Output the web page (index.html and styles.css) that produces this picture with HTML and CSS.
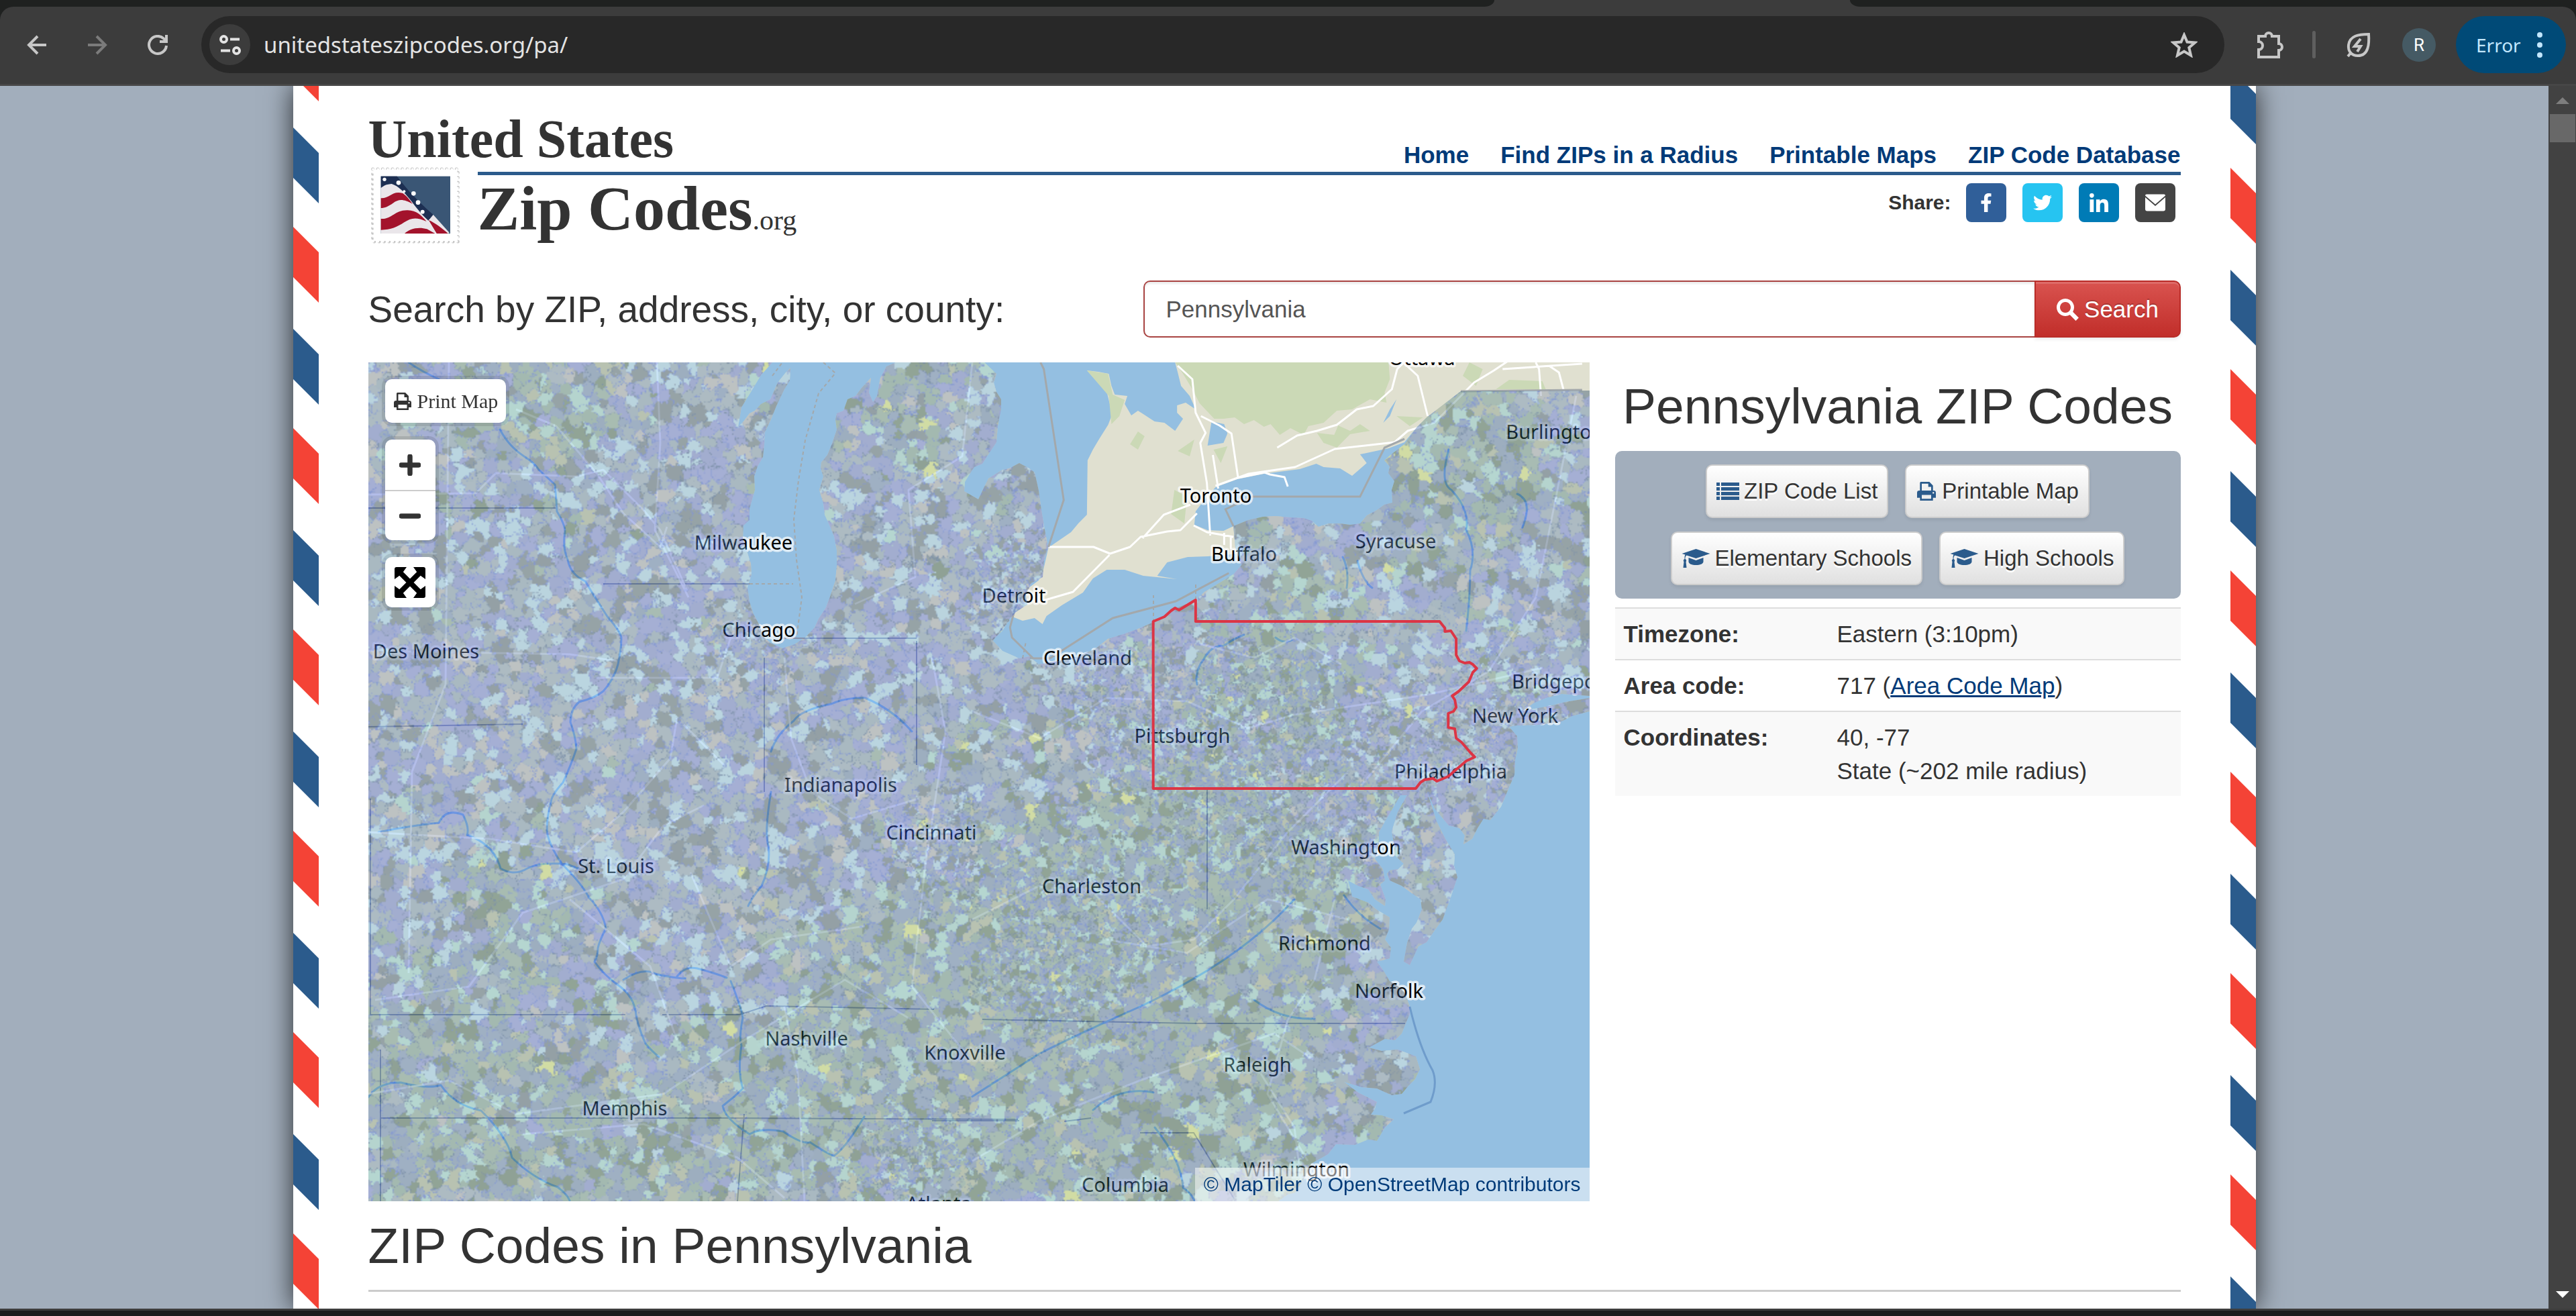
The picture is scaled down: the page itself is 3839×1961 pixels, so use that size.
FILE: index.html
```html
<!DOCTYPE html>
<html lang="en">
<head>
<meta charset="utf-8">
<title>Pennsylvania ZIP Codes</title>
<link rel="stylesheet" href="styles.css">
</head>
<body>
<svg class="sprite" aria-hidden="true">
  <symbol id="i-print" viewBox="0 0 26 26"><path fill-rule="evenodd" d="M5 0h12l5 5v7h1a3 3 0 0 1 3 3v7h-4v4H4v-4H0v-7a3 3 0 0 1 3-3h1V1zM6.500 2.500V12h13V7h-4V2.500zM6.500 18v5.500h13V18zM22.500 14a1.200 1.200 0 1 0 .01 0z"/></symbol>
  <symbol id="i-list" viewBox="0 0 34 26"><path d="M0 0h5v5H0zM7 0h27v5H7zM0 7h5v5H0zM7 7h27v5H7zM0 14h5v5H0zM7 14h27v5H7zM0 21h5v5H0zM7 21h27v5H7z"/></symbol>
  <symbol id="i-cap" viewBox="0 0 42 29"><path d="M21 0l21 7-21 7L7 9.500C5 11 5 13 5 15c2 1 2 3 1 4l1 9H2l1-9c-1-1-1-3 1-4 0-3 0-5 1-6.500L0 7zM10 13l11 4 11-4v6c0 3-5 5-11 5s-11-2-11-5z"/></symbol>
  <symbol id="i-search" viewBox="0 0 34 34"><path fill-rule="evenodd" d="M14 1a13 13 0 1 1-.01 0zm0 5a8 8 0 1 0 .01 0z"/><path d="M21 24l3-3 8.500 8.500-3 3z" stroke="currentColor" stroke-width="2"/></symbol>
</svg>

<header class="browser">
  <div class="tabstrip"><i class="tab-left"></i><i class="tab-right"></i></div>
  <div class="toolbar">
    <div class="nav-buttons">
      <button aria-label="Back"><svg viewBox="0 0 30 30"><path d="M29 15H3M16 2L3 15l13 13"/></svg></button>
      <button class="dim" aria-label="Forward"><svg viewBox="0 0 30 30"><path d="M1 15h26M14 2l13 13-13 13"/></svg></button>
      <button aria-label="Reload"><svg viewBox="0 0 30 30"><path d="M28 16a13 13 0 1 1-4-10.500L28 9M28 0v10H18"/></svg></button>
    </div>
    <div class="urlbar">
      <button class="site-info" aria-label="View site information"><svg viewBox="0 0 32 30"><circle cx="6.500" cy="6.500" r="4.500"/><path d="M16 6.500h14M2 23.500h14"/><circle cx="25.500" cy="23.500" r="4.500"/></svg></button>
      <input class="url" aria-label="Address" value="unitedstateszipcodes.org/pa/">
      <button class="star" aria-label="Bookmark"><svg viewBox="0 0 40 38"><path d="M20 4l4.500 10.500L36 15.500l-8.700 7.500 2.700 11.500-10-6-10 6L12.700 23 4 15.500l11.500-1z"/></svg></button>
    </div>
    <button class="ext" aria-label="Extensions"><svg viewBox="0 0 42 42"><path d="M3 8h10a5 5 0 0 1 10 0h10v11a5 5 0 0 1 0 10v10H3V28a6 6 0 0 0 0-12z"/></svg></button>
    <i class="divider"></i>
    <button class="leaf" aria-label="Energy saver"><svg viewBox="0 0 36 38"><path d="M2 36l5-6M33 3c1 14 0 32-16 32C7 35 2 28 3 19 5 5 18 3 33 3zM21 10l-9 11h9l-5 8"/></svg></button>
    <button class="profile" aria-label="Profile">R</button>
    <button class="error">Error <svg viewBox="0 0 8 38"><circle cx="4" cy="4" r="4"/><circle cx="4" cy="19" r="4"/><circle cx="4" cy="34" r="4"/></svg></button>
  </div>
</header>

<div class="window">
  <main class="page">
    <header class="masthead">
      <div class="top-row">
        <span class="brand brand-top">United States</span>
        <nav><a href="#">Home</a><a href="#">Find ZIPs in a Radius</a><a href="#">Printable Maps</a><a href="#">ZIP Code Database</a></nav>
      </div>
      <div class="low-row">
        <svg class="stamp" viewBox="36 54 400 348">
          <rect x="46" y="66" width="380" height="324" fill="none" stroke="#c8c8c8" stroke-width="15" stroke-linecap="round" stroke-dasharray="0 22"/>
          <rect x="47" y="67" width="378" height="322" fill="none" stroke="#fff" stroke-width="11" stroke-linecap="round" stroke-dasharray="0 22"/>
          <rect x="49" y="69" width="374" height="318" fill="#fff"/>
          <rect x="82" y="98" width="310" height="256" fill="#3a5675"/>
          <path d="M82 140l70-12 140 160 90 66H82z" fill="#eae6ea"/>
          <path d="M82 98h72c40 50 70 90 162 172l-22 26C230 240 190 150 130 132c-20-4-35 10-48 18z" fill="#1d2f52"/>
          <path d="M82 196c40 2 50-36 98-22 18 12 34 34 44 48-40-22-60-24-88-4-20 14-36 22-54 22zM82 288c50 4 60-40 120-38 40 2 60 22 84 50-50-22-70-14-100 4-30 20-60 34-104 34zM188 354c20-20 60-32 100-20l36 20zM296 294c30 24 60 36 86 60h-50z" fill="#a3132c"/>
          <path d="M316 270l72 80-6 4-86-60z" fill="#eae6ea"/>
          <path d="M296 294c30 14 60 36 86 60h-50z" fill="#a3132c"/>
          <g fill="#fff"><circle cx="98" cy="112" r="8"/><circle cx="161" cy="127" r="10"/><circle cx="228" cy="175" r="10"/><circle cx="248" cy="215" r="10"/><circle cx="268" cy="257" r="9"/><circle cx="186" cy="166" r="6"/></g>
        </svg>
        <div class="rule-row">
          <span class="brand brand-low">Zip Codes<small>.org</small></span>
          <div class="share"><b>Share:</b>
            <a href="#" class="fb" aria-label="Facebook"><svg viewBox="0 0 320 512"><path d="M279.140 288l14.220-92.660h-88.910v-60.130c0-25.350 12.420-50.060 52.240-50.060h40.420V6.260S260.430 0 225.360 0c-73.220 0-121.080 44.380-121.080 124.720v70.620H22.890V288h81.390v224h100.170V288z"/></svg></a>
            <a href="#" class="tw" aria-label="Twitter"><svg viewBox="0 0 512 512"><path d="M459.370 151.716c.325 4.548.325 9.097.325 13.645 0 138.720-105.583 298.558-298.558 298.558-59.452 0-114.680-17.219-161.137-47.106 8.447.974 16.568 1.299 25.340 1.299 49.055 0 94.213-16.568 130.274-44.832-46.132-.975-84.792-31.188-98.112-72.772 6.498.974 12.995 1.624 19.818 1.624 9.421 0 18.843-1.300 27.614-3.573-48.081-9.747-84.143-51.980-84.143-102.985v-1.299c13.969 7.797 30.214 12.670 47.431 13.319-28.264-18.843-46.781-51.005-46.781-87.391 0-19.492 5.197-37.360 14.294-52.954 51.655 63.675 129.300 105.258 216.365 109.807-1.624-7.797-2.599-15.918-2.599-24.040 0-57.828 46.782-104.934 104.934-104.934 30.213 0 57.502 12.670 76.670 33.137 23.715-4.548 46.456-13.320 66.599-25.340-7.798 24.366-24.366 44.833-46.132 57.827 21.117-2.273 41.584-8.122 60.426-16.243-14.292 20.791-32.161 39.308-52.628 54.253z"/></svg></a>
            <a href="#" class="li" aria-label="LinkedIn"><svg viewBox="0 0 448 448"><path d="M100.280 448H7.400V148.900h92.880zM53.790 108.100C24.090 108.100 0 83.500 0 53.800a53.790 53.790 0 0 1 107.580 0c0 29.700-24.100 54.300-53.790 54.300zM447.900 448h-92.680V302.400c0-34.700-.7-79.200-48.290-79.200-48.290 0-55.690 37.700-55.690 76.700V448h-92.780V148.900h89.080v40.800h1.300c12.400-23.500 42.690-48.300 87.880-48.300 94 0 111.280 61.900 111.280 142.300V448z"/></svg></a>
            <a href="#" class="em" aria-label="Email"><svg viewBox="0 0 30 25"><path d="M2 0h26a2 2 0 0 1 2 2L15 15 0 2a2 2 0 0 1 2-2zM0 4.500L15 17.500l15-13V22a3 3 0 0 1-3 3H3a3 3 0 0 1-3-3z"/></svg></a>
          </div>
        </div>
      </div>
    </header>

    <form class="search" onsubmit="return false">
      <label for="q">Search by ZIP, address, city, or county:</label>
      <div class="search-group">
        <input id="q" type="text" value="Pennsylvania">
        <button><svg><use href="#i-search"/></svg>Search</button>
      </div>
    </form>

    <div class="columns">
      <section class="map" aria-label="Map">
        <svg class="map-base" viewBox="0 0 1820 1250">
          <rect width="1820" height="1250" fill="#94bfe1"/>
          <path id="us-land" fill="#e0e0d0" fill-rule="evenodd" d="M0 0H602L585 19 570 44 556 67 551 96 559 88 568 76 576 72 585 62 599 55 610 30 622 15 629 8 628 27 620 40 608 65 600 85 591 104 590 122 588 141 580 155 575 170 576 190 568 218 568 235 559 243 558 262 565 284 570 300 571 316 565 335 568 357 574 375 582 390 588 408 599 418 617 426 635 420 651 410 665 395 671 382 682 365 688 349 696 325 698 304 698 280 694 259 686 240 680 227 678 210 672 190 675 180 678 170 674 158 675 149 684 138 691 121 698 100 696 85 698 76 708 72 714 55 726 50 735 38 749 23 746 45 752 59 758 50 763 23 772 6 786 0H918L936 17 932 30 936 44 943 55 943 70 938 95 936 119 922 140 915 151 903 156 895 168 889 178 888 192 909 204 918 185 924 173 945 160 955 158 970 150 985 158 993 164 999 191 1003 220 1008 249 1013 276 1007 295 1005 320 988 329 980 345 982 361 965 372 955 383 945 400 930 414 945 430 970 441 985 438 999 450 1028 445 1058 438 1083 427 1102 412 1125 405 1147 397 1170 387 1186 382 1202 367 1233 354 1246 342 1274 325 1290 315 1301 302 1297 290 1292 276 1289 244 1311 235 1333 230 1352 229 1374 231 1394 232 1406 236 1416 245 1431 240 1448 240 1463 242 1478 240 1488 228 1503 220 1514 212 1526 209 1525 190 1529 177 1520 165 1522 155 1514 146 1527 135 1544 122 1562 97 1577 82 1598 66 1628 43 1652 43 1820 42V497L1778 494 1755 500 1736 508 1721 519 1760 512 1784 506 1820 500V520L1794 527 1778 535 1745 540 1712 541 1700 543 1712 557 1713 575 1709 593 1708 615 1700 633 1688 662 1672 682 1662 680 1653 694 1645 710 1632 718 1634 705 1626 694 1610 690 1589 665 1578 640 1592 684 1605 710 1619 733 1618 750 1623 767 1612 800 1601 830 1590 845 1577 864 1565 870 1558 885 1552 898 1543 893 1548 865 1555 844 1562 835 1570 815 1568 800 1555 791 1540 780 1522 772 1518 762 1522 757 1535 755 1543 747 1530 735 1528 715 1525 699 1534 670 1548 645 1538 645 1515 684 1506 700 1506 718 1500 740 1512 755 1515 772 1508 778 1516 800 1515 810 1500 800 1490 785 1475 780 1460 772 1466 796 1490 805 1502 815 1522 827 1521 845 1515 860 1524 872 1522 888 1503 893 1512 905 1522 922 1535 930 1545 940 1552 960 1552 971 1546 985 1540 1000 1530 1010 1515 1008 1491 1021 1510 1026 1534 1024 1545 1028 1561 1034 1567 1053 1560 1068 1550 1078 1540 1090 1525 1092 1503 1082 1480 1080 1454 1072 1475 1088 1503 1102 1500 1112 1494 1121 1510 1122 1528 1128 1515 1140 1503 1160 1490 1158 1470 1166 1442 1165 1430 1180 1405 1194 1395 1215 1381 1237 1370 1240 1356 1250H0Z"/>
          <path d="M1552 960q14 60 34 95q8 20-3 47l-40 17" fill="none" stroke="#6f9ccb" stroke-width="3"/>
          <g transform="matrix(.988 0 0 1 10.700 0)">
            <path fill="#e0e0d0" fill-rule="evenodd" d="M1015 276L1049 253 1060 240 1073 227 1074 146 1082 130 1091 115 1105 93 1112 75 1107 60 1103 44 1085 25 1073 12 1090 14 1106 17 1110 35 1115 48 1134 50 1130 62 1140 79 1150 72 1158 77 1175 88 1190 90 1206 102 1218 84 1209 75 1209 64 1222 60 1237 70 1228 50 1215 35 1210 15 1206 0H1832V42L1661 43 1637 43 1607 66 1570 97 1552 119 1528 128 1485 137 1495 150 1473 169 1455 158 1430 156 1419 151 1394 159 1340 166 1300 174 1267 186 1250 205 1237 222 1235 242 1255 250 1279 251 1294 244 1297 276 1303 285 1255 289 1225 290 1194 298 1179 318 1209 323 1158 318 1130 309 1103 309 1082 322 1067 343 1035 362 1012 378 1006 390 994 381 976 385 958 378V356L1000 325 1006 315ZM1261 88L1280 92 1285 106 1279 120 1255 124ZM1540 55L1530 80 1520 90 1530 70Z"/>
            <path fill="#cbd9b6" d="M1206 0H1528L1530 25 1522 45 1525 60 1500 55 1473 70 1450 72 1430 90 1407 95 1400 108 1380 98 1364 108 1350 92 1340 96 1325 86 1310 92 1296 82 1279 84 1265 84 1243 61 1232 40 1218 17ZM1073 12L1105 17 1112 48 1130 56 1122 80 1110 92 1106 50ZM1420 105L1446 108 1452 94 1470 102 1485 92 1500 102 1470 107 1450 127 1430 120ZM1150 103L1160 110 1150 130 1138 122ZM1235 115L1228 140 1210 132ZM1264 130L1285 125 1275 150ZM1205 190L1224 200 1220 240 1200 226ZM1540 80L1580 82 1560 95ZM1690 40L1710 26 1760 28 1765 40ZM1640 20L1650 0 1670 10 1660 35Z"/>
            <g fill="none" stroke="#fff" stroke-width="3" stroke-linejoin="round">
              <path d="M1210 5l22 20 5 50 15 30-8 15 10 60 5 78M1245 80l28 14 18 12 10 66 40-8 8 3 22 4 5 14M1263 138l8 50M1360 127l30-18 30-7 30-9 30-23 25-5 28-25 8-30 20-20M1550 0l22 20 15 60M1267 184l50-18 70-10 60-27 90-10 20-17 40-12 60-60 30-18 30-20M1015 275h68l25 10 30-10 16-15 40-8 20-2 25-25M1107 287l-55 55-52 15M1157 262l32-35 40-15M1234 243l20 10 40 7M1280 254v18M1290 258v20M1750 0l5 10 3 40M1770 5l15 10 8 30M1700 10l120-8"/>
            </g>
            <path fill="none" stroke="#a3a8ab" stroke-width="3" d="M1003 0l5 10 30 195-23 70M985 335l-20 30-8 30 3 15 32 31h25l95-60 95-25 80-42M1294 244l-12-25 40-19h163l37-73 30-13M1637 43l183-2"/>
          </g>
          <path fill="none" stroke="#a3a8ab" stroke-width="2" stroke-dasharray="5 4" d="M678 0l18 16-25 30-20 70-10 60-7 58 4 60 8 56-8 60M568 330h65M1233 354v-25M1170 387v-40M975 441l5-25M930 414l25-30M602 20l15-20"/>
          <g fill="none" stroke="#8891ab" stroke-width="2">
            <path d="M0 217h282M350 330h218M0 543l230-4M3 650v322h380M438 972h115l40-13 250 5M18 1126h510l440 2M590 440v200M617 411h200M817 415V600M915 979l320 6h310M1037 1131l40-5M1250 635v180M18 1024v226M560 1120l-10 130M840 1130h130M1150 1148h80l60 98"/>
          </g>
          <g fill="none" stroke="#7db3ea" stroke-width="3" stroke-linejoin="round" stroke-linecap="round">
            <path d="M60 0q20 14 45 25M196 100q14 26 36 40q16 10 22 20l24 22q2 20 3 40q12 20 12 30q-4 24 4 42q4 22 26 32q12 20 34 54q18 20 20 30q0 16-5 40q-6 22-22 40q-12 10-36 16q-12 10-13 30q8 22 9 40q-8 24-20 50q-18 20-18 30q-8 30-5 48q6 22 22 44q30 30 40 50q20 20 25 45q-10 20-12 30q0 12-5 20q14 20 34 34q26 18 28 46q4 20 14 42q8 10 20 20M600 580q8-26 34-46q10-16 56-25q20-10 50-9q40 16 70 50M15 700q50-10 90-14q10-22 36-12q10 20 6 30q40 14 50 50q20 12 40 0q20-10 60-6l20 8M460 915q12-16 30-12q30 8 44 14M540 922q16 40 18 54q-6 30-2 42q-6 40 2 64q-14 14-30 26q4 20 40 42q18-10 50-4q30 20 40 16q30 20 36 20q16-10 45-58M600 640q-10 60-4 80q4 30-10 60q-16 20-20 30M380 920q30-20 50-8q30 6 42 6M0 1095q14-22 48-22q40 10 60 4q20 30 60 38q40 40 46 70q30 30 68 44q14 10 18 20M1235 480q-4-20 10-38q10-20 30-20q14-10 30-16M1352 410q12 10 24 4M1610 130q-14 50 4 60q28 30 22 60q16 30 6 60q0 40-6 90M1712 196q24 10 8 50M1452 290q10 20 6 46M1474 296q8 30 22 40M1380 800q-80 90-230 160q-90 40-150 70l-100 64M1454 794q20 30 54 50M1320 950q40 30 90 28M1080 1114q40-36 90-26M1172 1140q40 50 42 90q20 10 30 60"/>
          </g>
          <g fill="none" stroke="#fff" stroke-width="3" stroke-linejoin="round" opacity=".8">
            <path d="M220 70l60 25 60 70 40 60 55 50 10-30M0 197l160-2 30-30 120 5 40-10 60 60 25 30 40 90M430 0l5 120-8 130 50 100M0 430l300 5 70 10M340 470h180l20-60M120 0l-5 480-50 130-5 300M0 700l180 10 130 20 70-60 70-80 10-60M530 600l-60-60M620 440l10 120 30 80 60 40 100-30M300 800l120 100 40 110M500 660l-60 30-60 80-150 50-80 110-140 20M480 760l60 140 60-40 140-20M0 1090l120-20 100 50 220-30 120-80 150-90 100 60M230 1150l180-15 140 50 70 60M620 960l20 100 10 190M900 0l-15 140-80 50 10 130-90 40M900 520l100 40 100-60 120 5 90 40 70-20 200-30 170-40M900 830l120-60 60 20 80 80 70-10 60-60 80-100 90-90M1100 860l120 20 120-80 120 30M1240 420l80 20 60-30 70 40M1440 800l-30 120-40 60-30 110 60 100M900 1190l100-60 150-60 200-70 60 40M1330 1060l50 80 10 80M1800 50l-60 300-70 110-100 60-90 110M840 440l20 110-30 200-20 180 80 100"/>
          </g>
          <g class="labels">
            <text x="559" y="279">Milwaukee</text><text x="582" y="409">Chicago</text><text x="86" y="441">Des Moines</text><text x="962" y="358">Detroit</text><text x="1072" y="451">Cleveland</text><text x="1263" y="209">Toronto</text><text x="1305" y="296">Buffalo</text><text x="1531" y="277">Syracuse</text><text x="1768" y="114">Burlington</text><text x="1570" y="4">Ottawa</text><text x="1778" y="486">Bridgeport</text><text x="1709" y="537">New York</text><text x="1213" y="567">Pittsburgh</text><text x="1613" y="620">Philadelphia</text><text x="704" y="640">Indianapolis</text><text x="839" y="711">Cincinnati</text><text x="369" y="761">St. Louis</text><text x="1078" y="791">Charleston</text><text x="1457" y="733">Washington</text><text x="1425" y="876">Richmond</text><text x="1521" y="947">Norfolk</text><text x="653" y="1018">Nashville</text><text x="889" y="1039">Knoxville</text><text x="1325" y="1057">Raleigh</text><text x="382" y="1122">Memphis</text><text x="1128" y="1236">Columbia</text><text x="1383" y="1213">Wilmington</text><text x="850" y="1264">Atlanta</text>
          </g>
        </svg>
        <canvas class="zip-areas" id="zip-areas" width="1820" height="1250"></canvas>
        <svg class="outline" viewBox="0 0 1820 1250"><path transform="matrix(.988 0 0 1 10.700 0)" d="M1173 386L1190 379 1200 370 1206 366 1212 369 1237 354V386H1605L1613 396V401L1622 400 1630 412V436L1635 445 1643 448 1650 447 1655 450 1661 456 1655 462 1649 476 1634 490 1624 497 1628 503 1630 514 1626 520 1618 523V544L1628 546 1630 560 1638 566 1652 582 1658 588 1645 594 1625 611 1618 617 1601 624 1595 620 1582 622 1576 626 1569 635H1173Z"/></svg>
        <button class="ctl print"><svg><use href="#i-print"/></svg>Print Map</button>
        <div class="ctl zoom"><button aria-label="Zoom in"><svg viewBox="0 0 30 30"><path d="M3 15h24M15 3v24"/></svg></button><button aria-label="Zoom out"><svg viewBox="0 0 30 30"><path d="M3 15h24"/></svg></button></div>
        <button class="ctl full" aria-label="Full screen"><svg viewBox="0 0 46 46"><path d="M8 8l30 30M38 8L8 38" stroke="#000" stroke-width="8"/><path d="M0 18V3a3 3 0 0 1 3-3h15l-5 7-6 6zM28 0h15a3 3 0 0 1 3 3v15l-7-5-6-6zM46 28v15a3 3 0 0 1-3 3H28l5-7 6-6zM18 46H3a3 3 0 0 1-3-3V28l7 5 6 6z"/></svg></button>
        <div class="attribution"><a href="#">© MapTiler</a> <a href="#">© OpenStreetMap contributors</a></div>
      </section>

      <aside class="info">
        <h1>Pennsylvania ZIP Codes</h1>
        <div class="links">
          <a href="#"><svg class="i-list"><use href="#i-list"/></svg>ZIP Code List</a>
          <a href="#"><svg class="i-print"><use href="#i-print"/></svg>Printable Map</a>
          <a href="#"><svg class="i-cap"><use href="#i-cap"/></svg>Elementary Schools</a>
          <a href="#"><svg class="i-cap"><use href="#i-cap"/></svg>High Schools</a>
        </div>
        <table>
          <tr><th scope="row">Timezone:</th><td>Eastern (3:10pm)</td></tr>
          <tr><th scope="row">Area code:</th><td>717 (<a href="#">Area Code Map</a>)</td></tr>
          <tr><th scope="row">Coordinates:</th><td>40, -77<br>State (~202 mile radius)</td></tr>
        </table>
      </aside>
    </div>

    <h2>ZIP Codes in Pennsylvania</h2>
    <hr>
  </main>
  <div class="scrollbar" aria-hidden="true"><i class="up"></i><i class="thumb"></i><i class="down"></i></div>
</div>
<footer class="taskbar"></footer>
<script src="map.js"></script>
</body>
</html>
```
FILE: styles.css
```css
* { box-sizing: border-box; }
body { margin: 0; height: 100vh; display: flex; flex-direction: column; overflow: hidden; background: #a2aebc; color: #333; font: 35px/50px "Liberation Sans", Arial, sans-serif; }
button { font: inherit; color: inherit; border: 0; background: none; padding: 0; }
a { color: #003a78; }
svg { display: block; fill: currentColor; }
.sprite { position: absolute; width: 0; height: 0; }

/* browser window */
.browser { flex: none; background: #1f2120; }
.tabstrip { display: flex; height: 10px; background: #3c3c3c; }
.tab-left, .tab-right { background: #1f2120; }
.tab-left { width: 58%; border-bottom-right-radius: 24px 16px; }
.tab-right { flex: 1; margin-left: 530px; border-bottom-left-radius: 24px 16px; }
.toolbar { display: flex; align-items: center; height: 118px; padding: 0 15px 2px 40px; background: #3c3c3c; border-radius: 20px 20px 0 0; border-bottom: 3px solid #474747; color: #c7c7c7; }
.toolbar svg { fill: none; stroke: currentColor; stroke-width: 4; }
.nav-buttons { display: flex; gap: 60px; margin-right: 50px; }
.nav-buttons svg { width: 30px; height: 30px; }
.dim { color: #7b7b7b; }
.urlbar { flex: 1; display: flex; align-items: center; height: 85px; padding: 0 40px 0 12px; border-radius: 43px; background: #282828; }
.site-info { display: grid; place-items: center; width: 61px; height: 61px; border-radius: 50%; background: #3c3c3c; color: #e3e3e3; }
.site-info svg { width: 32px; height: 30px; }
.url { flex: 1; margin-left: 20px; padding: 0; border: 0; background: none; color: #e3e3e3; font: 33px/50px "Noto Sans", sans-serif; }
.star svg { width: 40px; height: 38px; }
.ext { margin-left: 48px; }
.ext svg { width: 42px; height: 42px; }
.divider { width: 5px; height: 41px; margin: 0 46px 0 41px; border-radius: 3px; background: #5f5f5f; }
.leaf svg { width: 36px; height: 38px; }
.profile { width: 50px; height: 50px; margin: 0 30px 0 47px; border-radius: 50%; background: #455a64; color: #fff; font: 26px/50px Roboto, sans-serif; }
.error { display: flex; align-items: center; justify-content: space-between; width: 164px; height: 85px; padding: 0 35px 0 30px; border-radius: 43px; background: #004a77; color: #c2e7ff; font: 28px/50px "Noto Sans", sans-serif; }
.error svg { width: 8px; height: 38px; fill: currentColor; stroke: none; }
.taskbar { flex: none; height: 11px; border-top: 3px solid #3d3d3d; background: #1c1c1c; }
.window { flex: 1; min-height: 0; display: flex; overflow: hidden; }
.scrollbar { flex: none; display: flex; flex-direction: column; align-items: center; width: 41px; padding: 17px 0 16px; background: #424242; }
.up, .down { border: 10px solid transparent; }
.up { border-top: 0; border-bottom-color: #7e7e7e; }
.down { margin-top: auto; border-bottom: 0; border-top-color: #fff; }
.thumb { width: 38px; height: 42px; margin-top: 15px; background: #686868; }

/* page with airmail edges */
.page {
  flex: 1; max-width: 2925px; margin: 0 auto; padding: 0 112px; box-shadow: 0 0 38px rgba(0, 0, 0, .75);
  background-color: #fff; background-repeat: repeat-y; background-position: 0 62px, 100% 274px;
  background-image:
    url("data:image/svg+xml,%3Csvg xmlns='http://www.w3.org/2000/svg' width='38' height='300'%3E%3Cpath fill='%232b5b8c' d='M0 0l38 38v75L0 75z'/%3E%3Cpath fill='%23f44336' d='M0 148l38 38v75L0 223z'/%3E%3C/svg%3E"),
    url("data:image/svg+xml,%3Csvg xmlns='http://www.w3.org/2000/svg' width='38' height='300'%3E%3Cpath fill='%232b5b8c' d='M0 0l38 38v75L0 75z'/%3E%3Cpath fill='%23f44336' d='M0 148l38 38v75L0 223z'/%3E%3C/svg%3E");
}
.top-row { display: flex; justify-content: space-between; align-items: flex-end; height: 128px; }
.brand { font-family: "Palatino Linotype", Palatino, "Liberation Serif", serif; font-weight: bold; white-space: nowrap; }
.brand-top { font-size: 80px; line-height: 98px; }
.top-row nav { display: flex; gap: 47px; }
.top-row nav a { font-weight: bold; text-decoration: none; }
.low-row { display: flex; height: 108px; }
.stamp { flex: none; width: 134px; height: 116px; margin: -8px 26px 0 3px; }
.rule-row { flex: 1; display: flex; justify-content: space-between; border-top: 5px solid #2b5b8c; }
.brand-low { font-size: 94px; line-height: 98px; }
.brand-low small { font-size: 42px; font-weight: normal; }
.share { display: flex; gap: 24px; padding: 12px 8px 0 0; font-size: 30px; line-height: 58px; }
.share b { margin-right: -2px; }
.share a { display: grid; place-items: center; width: 60px; height: 58px; border-radius: 8px; color: #fff; }
.share svg { width: 30px; height: 28px; }
.fb { background: #305f99; } .tw { background: #26c4f1; } .li { background: #007bb6; } .em { background: #444; }

.search { display: grid; grid-template-columns: 1155fr 1546fr; align-items: center; margin: 54px 0 37px; }
.search label { font-size: 55px; line-height: 80px; }
.search-group { display: flex; height: 85px; }
.search-group input { flex: 1; padding: 0 32px; border: 2px solid #a94442; border-right: 0; border-radius: 10px 0 0 10px; font: inherit; color: #555; box-shadow: inset 0 3px 3px rgba(0, 0, 0, .08); }
.search-group button { display: flex; align-items: center; justify-content: center; gap: 8px; width: 218px; border: 2px solid #b92c28; border-radius: 0 10px 10px 0; background: linear-gradient(#d9534f, #c12e2a); color: #fff; text-shadow: 0 -2px 0 rgba(0, 0, 0, .2); box-shadow: inset 0 3px 0 rgba(255, 255, 255, .15), 0 3px 5px rgba(0, 0, 0, .08); }
.search-group svg { width: 34px; height: 34px; }

.columns { display: grid; grid-template-columns: 1820fr 843fr; gap: 38px; align-items: start; }

/* map */
.map { position: relative; aspect-ratio: 1820 / 1250; overflow: hidden; }
.map-base, .zip-areas, .outline { position: absolute; inset: 0; width: 100%; height: 100%; }
.zip-areas { opacity: .45; }
.outline { fill: none; stroke: #dc3545; stroke-width: 4; stroke-linejoin: round; }
.labels { font: 29px "Noto Sans", sans-serif; text-anchor: middle; paint-order: stroke; stroke: rgba(255, 255, 255, .7); stroke-width: 7px; stroke-linejoin: round; fill: #000; }
.ctl { position: absolute; left: 25px; background: #fff; border-radius: 10px; box-shadow: 0 0 0 5px rgba(0, 0, 0, .1); }
.print { top: 25px; display: flex; align-items: center; gap: 8px; height: 65px; padding: 0 12px; font: 30px/40px "Liberation Serif", serif; }
.print svg { width: 28px; height: 26px; }
.zoom { top: 115px; width: 75px; }
.zoom button, .full { display: grid; place-items: center; width: 75px; height: 75px; }
.zoom button + button { border-top: 2px solid #ccc; }
.zoom svg { width: 32px; height: 32px; stroke: #333; stroke-width: 7; stroke-linecap: round; }
.full { top: 290px; color: #000; }
.full svg { width: 46px; height: 46px; }
.attribution { position: absolute; right: 0; bottom: 0; padding: 0 13px; background: rgba(255, 255, 255, .5); font-size: 30px; }
.attribution a { text-decoration: none; }

/* details column */
h1, h2 { margin: 0; font-size: 75px; font-weight: normal; }
h1 { margin: 25px 0 27px; line-height: 80px; text-align: center; }
.links { display: flex; flex-wrap: wrap; justify-content: center; gap: 20px 25px; padding: 20px 60px; border-radius: 10px; background: #a2aebc; }
.links a { display: flex; align-items: center; gap: 7px; height: 80px; padding: 0 14px; border: 2px solid #ccc; border-radius: 10px; background: linear-gradient(#fff, #e0e0e0); color: #333; font-size: 33px; text-decoration: none; text-shadow: 0 3px 0 #fff; box-shadow: 0 3px 5px rgba(0, 0, 0, .08); }
.links svg { color: #2b5b8c; }
.i-list { width: 34px; height: 26px; } .i-print { width: 32px; height: 28px; } .i-cap { width: 43px; height: 29px; }
table { width: 100%; margin-top: 13px; border-collapse: separate; border-spacing: 0; }
th, td { padding: 13px 13px 12px; border-top: 2px solid #ddd; text-align: left; vertical-align: top; }
th { width: 318px; }
tr:nth-child(odd) { background: #f9f9f9; }
h2 { margin-top: 25px; line-height: 82px; }
hr { margin: 25px 0; border: 0; border-top: 3px solid #ccc; }
```
FILE: map.js
```js
// Paints the mosaic of ZIP areas over the land part of the map.
(function () {
  var canvas = document.getElementById('zip-areas');
  var W = 910, H = 625;
  var tile = document.createElement('canvas');
  tile.width = W; tile.height = H;
  var tctx = tile.getContext('2d');
  var img = tctx.createImageData(W, H);

  function hash(x, y, k) {
    var h = Math.imul(x, 374761393) + Math.imul(y, 668265263) + Math.imul(k, 1274126177);
    h = Math.imul(h ^ (h >>> 13), 1274126177);
    h = Math.imul(h ^ (h >>> 16), 2246822519);
    return ((h ^ (h >>> 15)) >>> 0) / 4294967296;
  }
  function noise(x, y, k) {
    var i = Math.floor(x), j = Math.floor(y), u = x - i, v = y - j;
    u = u * u * (3 - 2 * u); v = v * v * (3 - 2 * v);
    var a = hash(i, j, k), b = hash(i + 1, j, k), c = hash(i, j + 1, k), d = hash(i + 1, j + 1, k);
    return a + (b - a) * u + (c - a) * v + (a - b - c + d) * u * v;
  }
  // forest regions: x, y, radius
  var forests = [[300,60,170],[850,60,170],[1680,180,190],[1400,460,170],[1150,830,260],[1330,820,230],[980,950,200],[250,850,130],[70,1160,240],[400,1230,230],[900,1150,230],[1150,1180,230],[1350,1090,190],[650,1130,160],[1600,100,120],[760,950,110]];
  // dense, small areas
  var dense = [[1090,830,150],[1400,650,170],[1260,540,140],[590,420,80],[970,330,90],[1670,540,130],[860,720,90],[1100,500,100],[1340,600,120],[1000,900,100],[800,1200,100]];
  function field(list, x, y) {
    var s = 0;
    for (var i = 0; i < list.length; i++) {
      var dx = (x - list[i][0]) / list[i][2], dy = (y - list[i][1]) / list[i][2];
      s += Math.exp(-(dx * dx + dy * dy) * 1.3);
    }
    return s;
  }
  var colors = [[92,114,216],[86,110,206],[92,114,216],[86,110,206],[101,136,174],[110,142,180],[101,136,174],[110,142,176],[140,200,244],[140,196,240],[55,82,112],[60,88,114],[146,156,176]];
  var cache = {};
  var SIZE = [8, 4];
  function cell(gx, gy, k) {
    var id = k * 1000000 + gx * 1000 + gy, c = cache[id];
    if (c) return c;
    var s = SIZE[k], px = (gx + hash(gx, gy, 7 + k)) * s, py = (gy + hash(gx, gy, 17 + k)) * s;
    var rgb = colors[Math.floor(hash(gx, gy, 3 + k) * colors.length)];
    var w = field(forests, px * 2, py * 2) + (noise(px / 12, py / 12, 9) - 0.5) * 1.6;
    if (w > 0.6) {
      rgb = [rgb[0] - 12, rgb[1] + 2, rgb[2] - 36];
      if (hash(gx, gy, 31) > 0.992) rgb = [190, 215, 110];
    }
    return (cache[id] = { x: px, y: py, w: 0.6 + hash(gx, gy, 41) * 0.9, c: rgb });
  }
  for (var y = 0; y < H; y++) for (var x = 0; x < W; x++) {
    var k = field(dense, x * 2, y * 2) + noise(x / 9, y / 9, 5) > 1 ? 1 : 0;
    var s = SIZE[k];
    var fx = x + (noise(x / 2, y / 2, 1) - 0.5) * 4, fy = y + (noise(x / 2, y / 2, 2) - 0.5) * 4;
    var gx = Math.floor(fx / s), gy = Math.floor(fy / s), d1 = 1e9, d2 = 1e9, best;
    for (var j = -1; j < 2; j++) for (var i = -1; i < 2; i++) {
      var c = cell(gx + i + 2, gy + j + 2, k);
      var ax = Math.abs(c.x - 2 * s - fx), ay = Math.abs(c.y - 2 * s - fy);
      var d = (Math.max(ax, ay) + 0.4 * Math.min(ax, ay)) * c.w;
      if (d < d1) { d2 = d1; d1 = d; best = c; } else if (d < d2) d2 = d;
    }
    var r = best.c[0], g = best.c[1], b = best.c[2];
    if (d2 - d1 < 0.75) {
      var t = hash(x, y, 77), q = t > 0.8 ? 0.85 : t > 0.3 ? 0.45 : 0.15;
      var ink = hash(x >> 3, y >> 3, 78) > 0.35 ? [15, 60, 215] : [0, 45, 120];
      r = r * (1 - q) + ink[0] * q; g = g * (1 - q) + ink[1] * q; b = b * (1 - q) + ink[2] * q;
    }
    var o = (y * W + x) * 4;
    img.data[o] = r; img.data[o + 1] = g; img.data[o + 2] = b; img.data[o + 3] = 255;
  }
  tctx.putImageData(img, 0, 0);
  var ctx = canvas.getContext('2d');
  ctx.clip(new Path2D(document.getElementById('us-land').getAttribute('d')), 'evenodd');
  ctx.drawImage(tile, 0, 0, canvas.width, canvas.height);
})();
```
